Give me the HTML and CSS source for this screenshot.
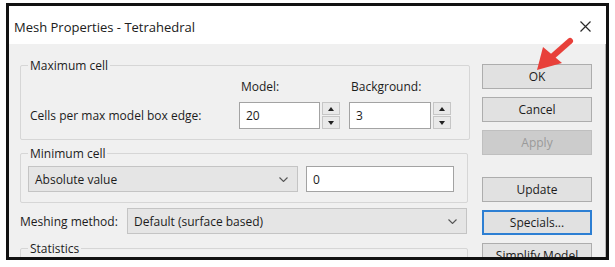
FILE: index.html
```html
<!DOCTYPE html>
<html>
<head>
<meta charset="utf-8">
<title>Mesh Properties - Tetrahedral</title>
<link rel="stylesheet" href="styles.css">
</head>
<body>
<div class="frame">
  <div class="titlebar">
    <span class="title">Mesh Properties - Tetrahedral</span>
    <svg class="close" width="11" height="11" viewBox="0 0 11 11"><path d="M0.5 0.5 L10.5 10.5 M10.5 0.5 L0.5 10.5" stroke="#2a2a2a" stroke-width="1.2" fill="none"/></svg>
  </div>
  <div class="body">
    <div class="main">
      <div class="group g-max">
        <div class="group-title">Maximum cell</div>
        <div class="max-grid">
          <span></span>
          <span class="hdr">Model:</span>
          <span class="hdr">Background:</span>
          <span class="lbl">Cells per max model box edge:</span>
          <div class="spin-field">
            <div class="input in-model">20</div>
            <div class="spinner"><span class="spin up"></span><span class="spin down"></span></div>
          </div>
          <div class="spin-field">
            <div class="input in-bg">3</div>
            <div class="spinner"><span class="spin up"></span><span class="spin down"></span></div>
          </div>
        </div>
      </div>
      <div class="group g-min">
        <div class="group-title">Minimum cell</div>
        <div class="min-row">
          <div class="select sel-abs"><span>Absolute value</span><svg class="chev" width="9" height="5" viewBox="0 0 9 5"><path d="M0.5 0.5 L4.5 4.5 L8.5 0.5" stroke="#555" stroke-width="1.1" fill="none"/></svg></div>
          <div class="input in-min">0</div>
        </div>
      </div>
      <div class="mesh-row">
        <span class="mesh-lbl">Meshing method:</span>
        <div class="select sel-mesh"><span>Default (surface based)</span><svg class="chev" width="9" height="5" viewBox="0 0 9 5"><path d="M0.5 0.5 L4.5 4.5 L8.5 0.5" stroke="#555" stroke-width="1.1" fill="none"/></svg></div>
      </div>
      <div class="group g-stats">
        <div class="group-title">Statistics</div>
      </div>
    </div>
    <div class="buttons">
      <div class="btn">OK</div>
      <div class="btn">Cancel</div>
      <div class="btn disabled">Apply</div>
      <div class="btn update">Update</div>
      <div class="btn focused">Specials...</div>
      <div class="btn">Simplify Model</div>
    </div>
  </div>
</div>
<svg class="arrow" width="615" height="267" viewBox="0 0 615 267">
  <line x1="570" y1="41" x2="553" y2="56" stroke="#e8403a" stroke-width="6" stroke-linecap="round"/>
  <polygon points="537,70 543,47 562,63" fill="#e8403a"/>
</svg>
</body>
</html>
```
FILE: styles.css
```css
* { box-sizing: border-box; }

body {
  margin: 0;
  background: #ffffff;
  font-family: "Open Sans", "Noto Sans", sans-serif;
  font-size: 12px;
  color: #1c1c1c;
  position: relative;
  width: 615px;
  height: 267px;
  overflow: hidden;
}

.frame {
  margin: 3px 0 0 6px;
  width: 603px;
  height: 257px;
  border: 3px solid #111111;
  display: flex;
  flex-direction: column;
  overflow: hidden;
}

.titlebar {
  height: 38px;
  flex: none;
  background: #ffffff;
  display: flex;
  align-items: center;
  justify-content: space-between;
  padding: 3px 15px 0 5px;
}

.title {
  font-size: 13px;
  color: #202020;
}

.body {
  flex: 1;
  min-height: 0;
  background: #f0f0f0;
  display: flex;
  border-right: 1px solid #b9b9b9;
}

.main {
  width: 473px;
  flex: none;
  padding: 21px 0 0 11px;
}

.group {
  border: 1px solid #d6d6d6;
  border-radius: 2px;
}

.group-title {
  width: fit-content;
  margin: -8px 0 0 7px;
  padding: 0 2px;
  background: #f0f0f0;
  line-height: 16px;
}

.g-max { width: 450px; }

.max-grid {
  display: grid;
  grid-template-columns: 209px 110px auto;
  grid-template-rows: 16px 27px;
  row-gap: 7px;
  align-items: center;
  padding: 5px 0 10px 9px;
}

.hdr { padding-left: 2px; line-height: 16px; }

.spin-field {
  display: flex;
  gap: 2px;
  height: 27px;
}

.input {
  background: #ffffff;
  border: 1px solid #a3a3a3;
  display: flex;
  align-items: center;
  padding-left: 6px;
}

.in-model { width: 81px; }
.in-bg { width: 82px; }

.spinner {
  width: 18px;
  display: flex;
  flex-direction: column;
  gap: 1px;
}

.spin {
  flex: 1;
  background: #e9e9e9;
  border: 1px solid #c6c6c6;
  display: flex;
  align-items: center;
  justify-content: center;
}

.spin::after {
  content: "";
  width: 0;
  height: 0;
  border-left: 3.5px solid transparent;
  border-right: 3.5px solid transparent;
}

.up::after { border-bottom: 4px solid #222; }
.down::after { border-top: 4px solid #222; }

.g-min {
  width: 448px;
  margin-top: 13px;
}

.min-row {
  display: flex;
  gap: 8px;
  padding: 4px 0 10px 7px;
}

.select {
  height: 26px;
  background: #e5e5e5;
  border: 1px solid #c4c4c4;
  display: flex;
  align-items: center;
  justify-content: space-between;
  padding: 0 9px 0 6px;
}

.sel-abs { width: 270px; }

.in-min {
  width: 148px;
  height: 26px;
}

.mesh-row {
  display: flex;
  align-items: center;
  margin-top: 5px;
}

.mesh-lbl { width: 107px; flex: none; }

.sel-mesh { width: 340px; }

.g-stats {
  width: 448px;
  height: 40px;
  margin-top: 14px;
}

.buttons {
  width: 110px;
  flex: none;
  padding-top: 20px;
  display: flex;
  flex-direction: column;
  gap: 8px;
}

.btn {
  height: 25px;
  flex: none;
  background: #e1e1e1;
  border: 1px solid #adadad;
  display: flex;
  align-items: center;
  justify-content: center;
}

.btn.disabled {
  background: #cccccc;
  border-color: #bfbfbf;
  color: #9a9a9a;
}

.btn.update { margin-top: 14px; }

.btn.focused {
  border: 2px solid #2d7fd3;
}

.arrow {
  position: absolute;
  left: 0;
  top: 0;
  pointer-events: none;
}
```
